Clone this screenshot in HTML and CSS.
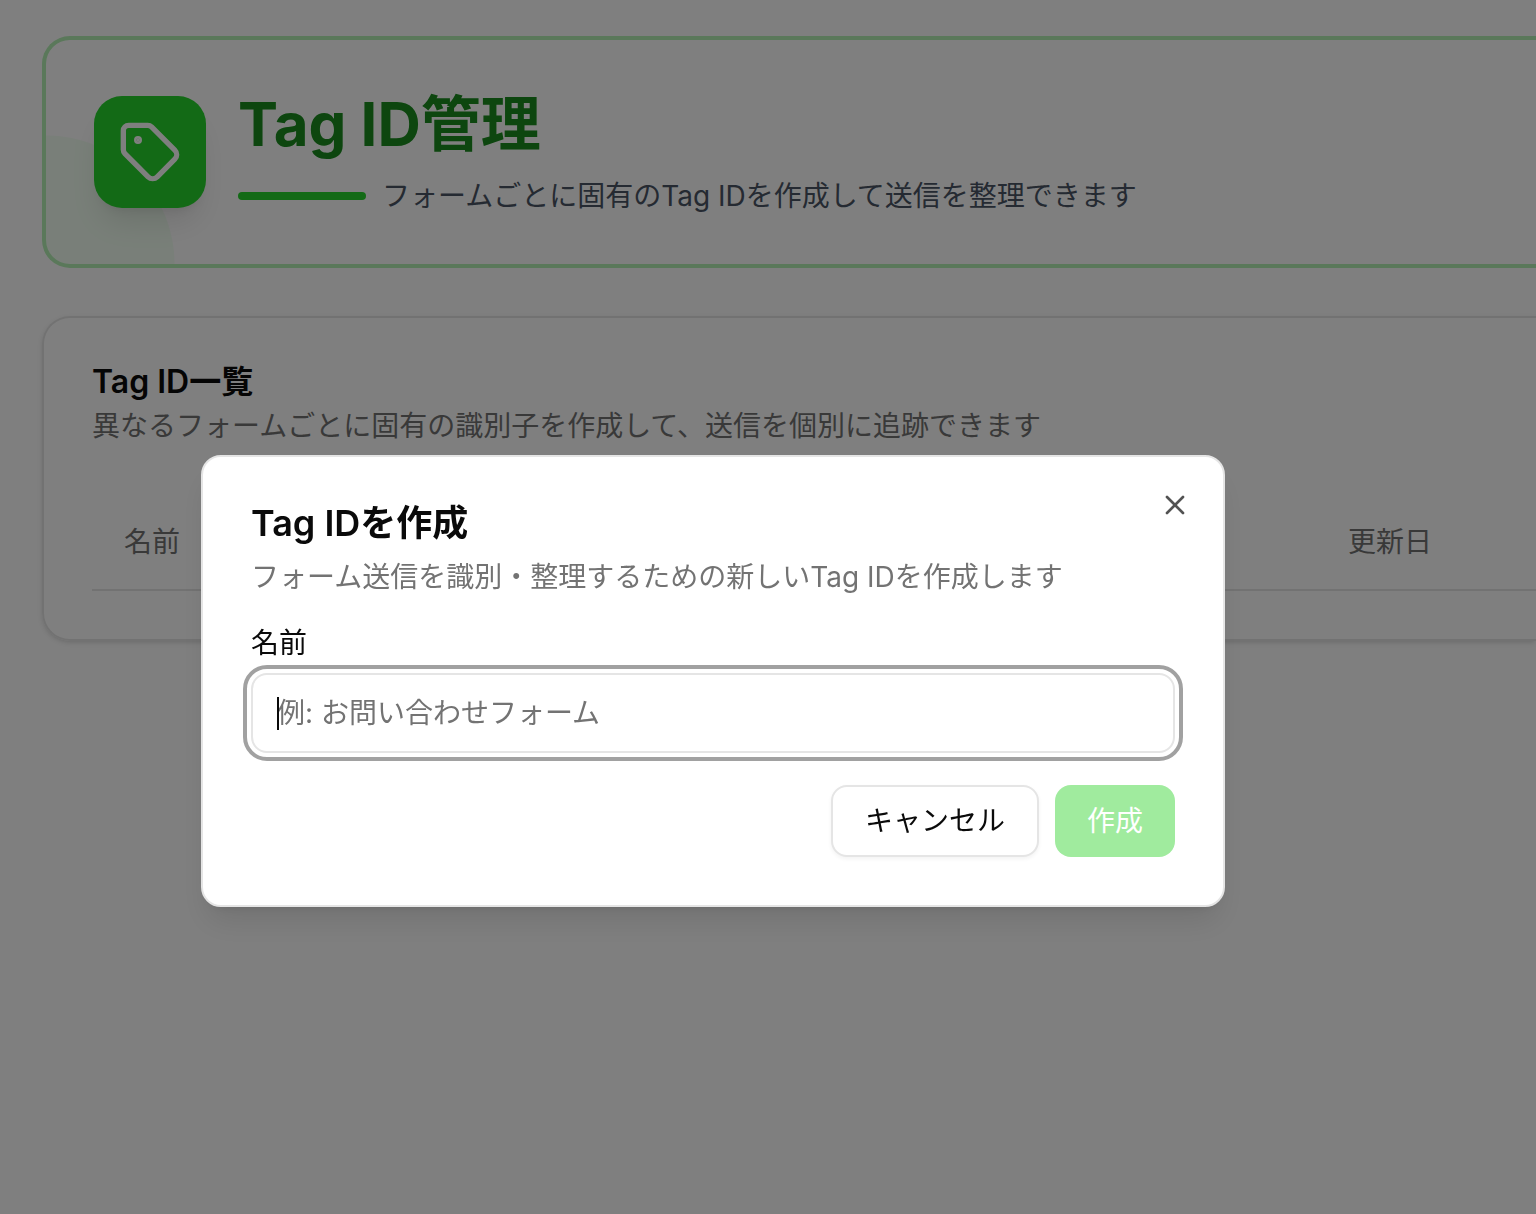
FILE: index.html
```html
<!DOCTYPE html>
<html lang="ja">
<head>
    <meta charset="UTF-8">
    <meta name="viewport" content="width=device-width, initial-scale=1.0">
    <title>Tag ID管理</title>
    <link rel="stylesheet" href="styles.css">
</head>
<body>
    <main class="page">
        <header class="banner">
            <div class="banner-icon">
                <svg viewBox="0 0 24 24" aria-hidden="true">
                    <path d="M12.586 2.586A2 2 0 0 0 11.172 2H4a2 2 0 0 0-2 2v7.172a2 2 0 0 0 .586 1.414l8.704 8.704a2.426 2.426 0 0 0 3.42 0l6.58-6.58a2.426 2.426 0 0 0 0-3.42z"/>
                    <circle cx="7.5" cy="7.5" r=".5" fill="currentColor"/>
                </svg>
            </div>
            <div class="banner-text">
                <h1>Tag ID管理</h1>
                <div class="banner-sub">
                    <span class="bar"></span>
                    <p>フォームごとに固有のTag IDを作成して送信を整理できます</p>
                </div>
            </div>
        </header>

        <section class="card">
            <div class="card-header">
                <h2>Tag ID一覧</h2>
                <p>異なるフォームごとに固有の識別子を作成して、送信を個別に追跡できます</p>
            </div>
            <table>
                <thead>
                    <tr>
                        <th class="col-name">名前</th>
                        <th>更新日</th>
                    </tr>
                </thead>
            </table>
        </section>
    </main>

    <div class="overlay">
        <form class="dialog" role="dialog" aria-labelledby="dialog-title">
            <button type="button" class="close" aria-label="閉じる">
                <svg viewBox="0 0 24 24" aria-hidden="true">
                    <path d="M18 6 6 18"/>
                    <path d="m6 6 12 12"/>
                </svg>
            </button>
            <div class="dialog-header">
                <h2 id="dialog-title">Tag IDを作成</h2>
                <p>フォーム送信を識別・整理するための新しいTag IDを作成します</p>
            </div>
            <div class="form-group">
                <label for="name">名前</label>
                <div class="field">
                    <input type="text" id="name" placeholder="例: お問い合わせフォーム" autocomplete="off" autofocus>
                    <span class="caret"></span>
                </div>
            </div>
            <div class="dialog-footer">
                <button type="button" class="btn btn-outline">キャンセル</button>
                <button type="submit" class="btn btn-primary" disabled>作成</button>
            </div>
        </form>
    </div>
</body>
</html>
```

FILE: styles.css
```css
* {
    box-sizing: border-box;
}

body {
    margin: 0;
    min-height: 100vh;
    background: #ffffff;
    color: #0a0a0a;
    font-family: Inter, 'Noto Sans CJK JP', sans-serif;
    font-size: 28px;
    line-height: 40px;
    overflow: hidden;
}

h1, h2, p {
    margin: 0;
}

svg {
    display: block;
    fill: none;
    stroke: currentColor;
    stroke-width: 2;
    stroke-linecap: round;
    stroke-linejoin: round;
}

/* Page */
.page {
    display: flex;
    flex-direction: column;
    gap: 48px;
    padding: 36px 0 36px 42px;
}

/* Banner */
.banner {
    display: flex;
    align-items: center;
    gap: 32px;
    padding: 48px;
    border: 4px solid #b4f0b4;
    border-right: none;
    border-radius: 28px 0 0 28px;
    background: radial-gradient(circle at 0 100%, #f2fff2 128px, transparent 129px);
}

.banner-icon {
    display: flex;
    align-items: center;
    justify-content: center;
    width: 112px;
    height: 112px;
    border-radius: 28px;
    background: #26d42c;
    color: #ffffff;
    box-shadow: 0 20px 30px -6px rgba(0, 0, 0, 0.1), 0 8px 12px -8px rgba(0, 0, 0, 0.1);
}

.banner-icon svg {
    width: 64px;
    height: 64px;
}

.banner-text {
    display: flex;
    flex-direction: column;
    gap: 16px;
}

.banner h1 {
    font-size: 60px;
    line-height: 72px;
    font-weight: 700;
    color: #1a8c1e;
}

.banner-sub {
    display: flex;
    align-items: center;
    gap: 16px;
    color: #4a5565;
}

.bar {
    width: 128px;
    height: 8px;
    border-radius: 4px;
    background: #26d42c;
}

/* Card */
.card {
    padding: 48px 0 48px 48px;
    border: 2px solid #e5e5e5;
    border-right: none;
    border-radius: 28px 0 0 28px;
    box-shadow: 0 2px 6px rgba(0, 0, 0, 0.1), 0 2px 4px -2px rgba(0, 0, 0, 0.1);
}

.card-header {
    display: flex;
    flex-direction: column;
    gap: 8px;
    margin-bottom: 48px;
}

.card-header h2 {
    font-size: 32px;
    line-height: 32px;
    font-weight: 600;
}

.card-header p,
.dialog-header p {
    color: #737373;
}

table {
    width: 100%;
    border-collapse: collapse;
}

th {
    height: 96px;
    padding: 0 32px;
    border-bottom: 2px solid #e5e5e5;
    color: #737373;
    font-weight: 400;
    text-align: left;
}

.col-name {
    width: 1224px;
}

/* Dialog */
.overlay {
    position: fixed;
    inset: 0;
    display: flex;
    align-items: center;
    justify-content: center;
    padding: 148px 110px 0 0;
    background: rgba(0, 0, 0, 0.5);
}

.dialog {
    position: relative;
    display: flex;
    flex-direction: column;
    gap: 32px;
    width: 100%;
    max-width: 1024px;
    padding: 48px;
    border: 2px solid #e5e5e5;
    border-radius: 20px;
    background: #ffffff;
    box-shadow: 0 20px 30px -6px rgba(0, 0, 0, 0.1), 0 8px 12px -8px rgba(0, 0, 0, 0.1);
}

.dialog-header {
    display: flex;
    flex-direction: column;
    gap: 16px;
}

.dialog-header h2 {
    font-size: 36px;
    line-height: 36px;
    font-weight: 600;
}

.close {
    position: absolute;
    top: 32px;
    right: 32px;
    padding: 0;
    border: none;
    background: none;
    color: #0a0a0a;
    opacity: 0.7;
    cursor: pointer;
}

.close svg {
    width: 32px;
    height: 32px;
}

/* Form */
.form-group {
    display: flex;
    flex-direction: column;
    gap: 16px;
}

label {
    line-height: 28px;
}

.field {
    position: relative;
    display: flex;
}

input {
    width: 100%;
    height: 80px;
    padding: 0 24px;
    border: 2px solid #e5e5e5;
    border-radius: 16px;
    background: #ffffff;
    color: #0a0a0a;
    font: inherit;
    caret-color: transparent;
}

input::placeholder {
    color: #737373;
    opacity: 1;
}

input:focus {
    outline: 4px solid #a1a1a1;
    outline-offset: 4px;
}

/* Text cursor, shown while the field is empty */
.caret {
    display: none;
    position: absolute;
    top: 24px;
    left: 26px;
    width: 2px;
    height: 33px;
    background: #0a0a0a;
}

input:focus:placeholder-shown + .caret {
    display: block;
}

/* Buttons */
.dialog-footer {
    display: flex;
    justify-content: flex-end;
    gap: 16px;
}

.btn {
    height: 72px;
    padding: 0 32px;
    border: none;
    border-radius: 16px;
    font: inherit;
    cursor: pointer;
}

.btn-outline {
    border: 2px solid #e5e5e5;
    background: #ffffff;
    color: #0a0a0a;
    box-shadow: 0 2px 4px rgba(0, 0, 0, 0.05);
}

.btn-primary {
    background: #42d73e;
    color: #ffffff;
}

.btn-primary:disabled {
    opacity: 0.5;
}
```
